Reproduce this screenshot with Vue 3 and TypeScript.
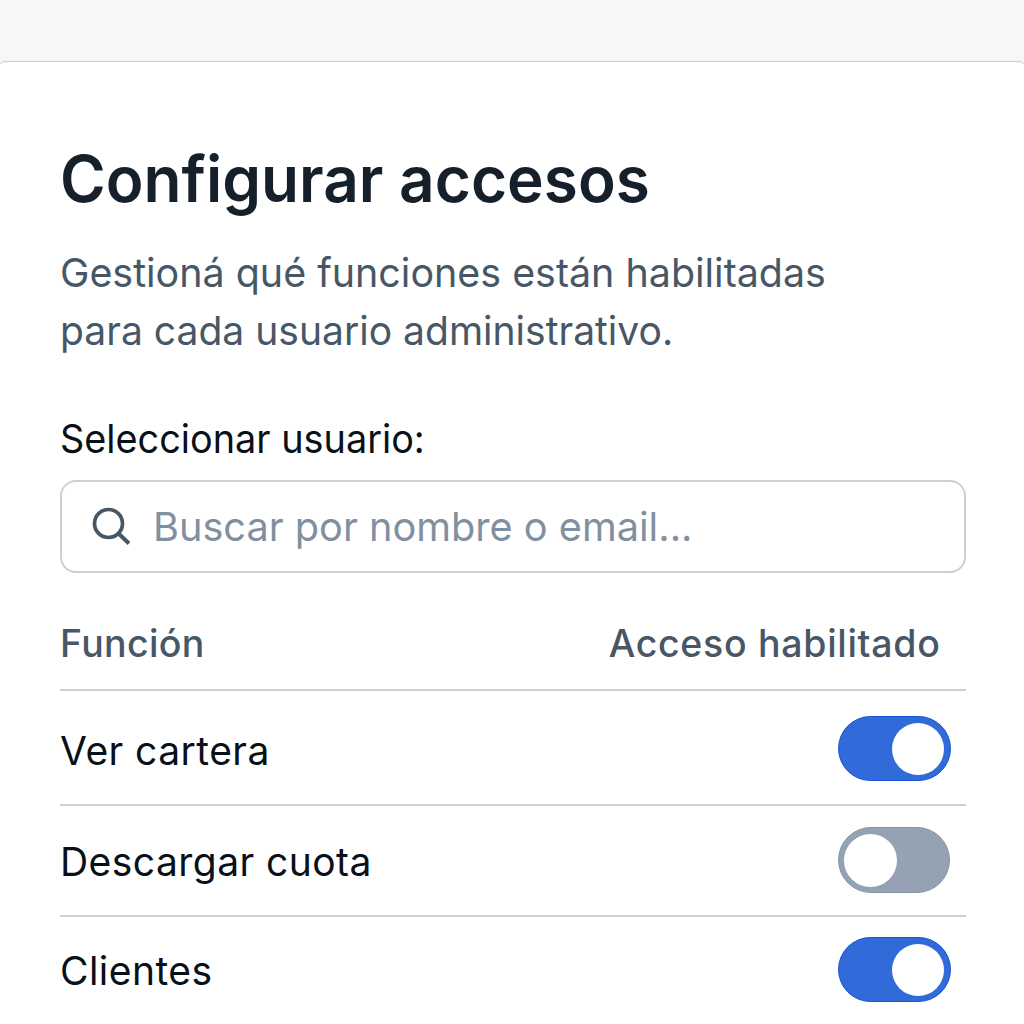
<script setup lang="ts">
import { ref } from 'vue'

interface Permission { label: string; enabled: boolean; height: number }

const query = ref('')
const permissions = ref<Permission[]>([
  { label: 'Ver cartera', enabled: true, height: 115 },
  { label: 'Descargar cuota', enabled: false, height: 111 },
  { label: 'Clientes', enabled: true, height: 109 },
])
</script>

<template>
  <main class="page">
    <section class="card">
      <h1><span>Configurar accesos</span></h1>
      <p class="intro"><span class="l1">Gestioná qué funciones están habilitadas</span><br><span class="l2">para cada usuario administrativo.</span></p>
      <label class="label" for="search"><span>Seleccionar usuario:</span></label>
      <div class="search">
        <svg width="42" height="42" viewBox="0 0 42 42" fill="none" stroke="#475766" stroke-width="3.7">
          <circle cx="17.5" cy="17.5" r="14" /><path d="M27.5 27.5L38 37.5" stroke-width="4" />
        </svg>
        <span id="search" class="placeholder">{{ query || 'Buscar por nombre o email...' }}</span>
      </div>
      <div class="head"><span class="h1c">Función</span><span class="h2c">Acceso habilitado</span></div>
      <div v-for="p in permissions" :key="p.label" class="row" :style="{ height: p.height + 'px' }">
        <span class="name">{{ p.label }}</span>
        <button class="switch" :class="{ on: p.enabled }" role="switch" :aria-checked="p.enabled" :aria-label="p.label" @click="p.enabled = !p.enabled"><i /></button>
      </div>
    </section>
  </main>
</template>

<style>
body { margin: 0; overflow: hidden; }
</style>
<style scoped>
* { box-sizing: border-box; }
.page { width: 1024px; height: 1024px; overflow: hidden; background: #f7f7f7; padding-top: 61px; font-family: Inter, sans-serif; color: #081018; }
.card { margin: 0 -4px; height: 990px; background: #fff; border: 1px solid #c3cdd5; border-radius: 10px; padding: 77px 61px 0 63px; }
h1 span, .intro span, .label span, .placeholder { display: inline-block; transform-origin: left center; }
h1 { margin: 0; font-size: 64px; line-height: 80px; font-weight: 600; white-space: nowrap; color: #15202b; }
h1 span { transform: scaleX(0.97); }
.intro { margin: 25px 0 0; font-size: 40px; line-height: 58px; color: #475766; white-space: nowrap; font-weight: 370; }
.intro .l1 { transform: scaleX(0.985); }
.intro .l2 { transform: scaleX(0.976); }
.label { display: block; margin-top: 49px; margin-bottom: 11px; font-size: 39.5px; line-height: 60px; }
.label span { transform: scaleX(0.958); }
.search { height: 93px; border: 2px solid #c8d1d8; border-radius: 16px; display: flex; align-items: center; padding-left: 29px; gap: 20px; font-size: 40px; font-weight: 370; color: #8190a0; }
.placeholder { transform: scaleX(0.992); }
.head { display: flex; justify-content: space-between; align-items: center; height: 118px; border-bottom: 2px solid #c8d1d8; padding: 24px 26px 0 0; color: #475766; font-size: 37.5px; font-weight: 460; letter-spacing: 0.35px; }
.h2c { letter-spacing: 0.7px; margin-right: -0.5px; }
.row { display: flex; justify-content: space-between; align-items: center; border-bottom: 2px solid #c8d1d8; padding-right: 15px; font-size: 39px; letter-spacing: 0.45px; }
.name { padding-top: 6px; }
.row:nth-last-child(2) .name { padding-top: 2px; }
.row:last-child .name { padding-top: 0; }
.switch { margin: 2px 0 0; width: 113px; height: 65px; padding: 5.5px 6px; border: 1px solid #8494a8; border-radius: 33px; background: #94a2b3; display: flex; }
.switch i { width: 52px; height: 52px; border-radius: 50%; background: #fff; }
.switch:not(.on) { width: 112px; height: 66px; margin: 0 1px 1px 0; padding: 5.5px 5px; }
.switch:not(.on) i { width: 53px; height: 53px; }
.switch.on { background: #306bd9; border-color: #1753d5; justify-content: flex-end; }
.row:last-child .switch { margin: 0 0 2px; }
</style>
